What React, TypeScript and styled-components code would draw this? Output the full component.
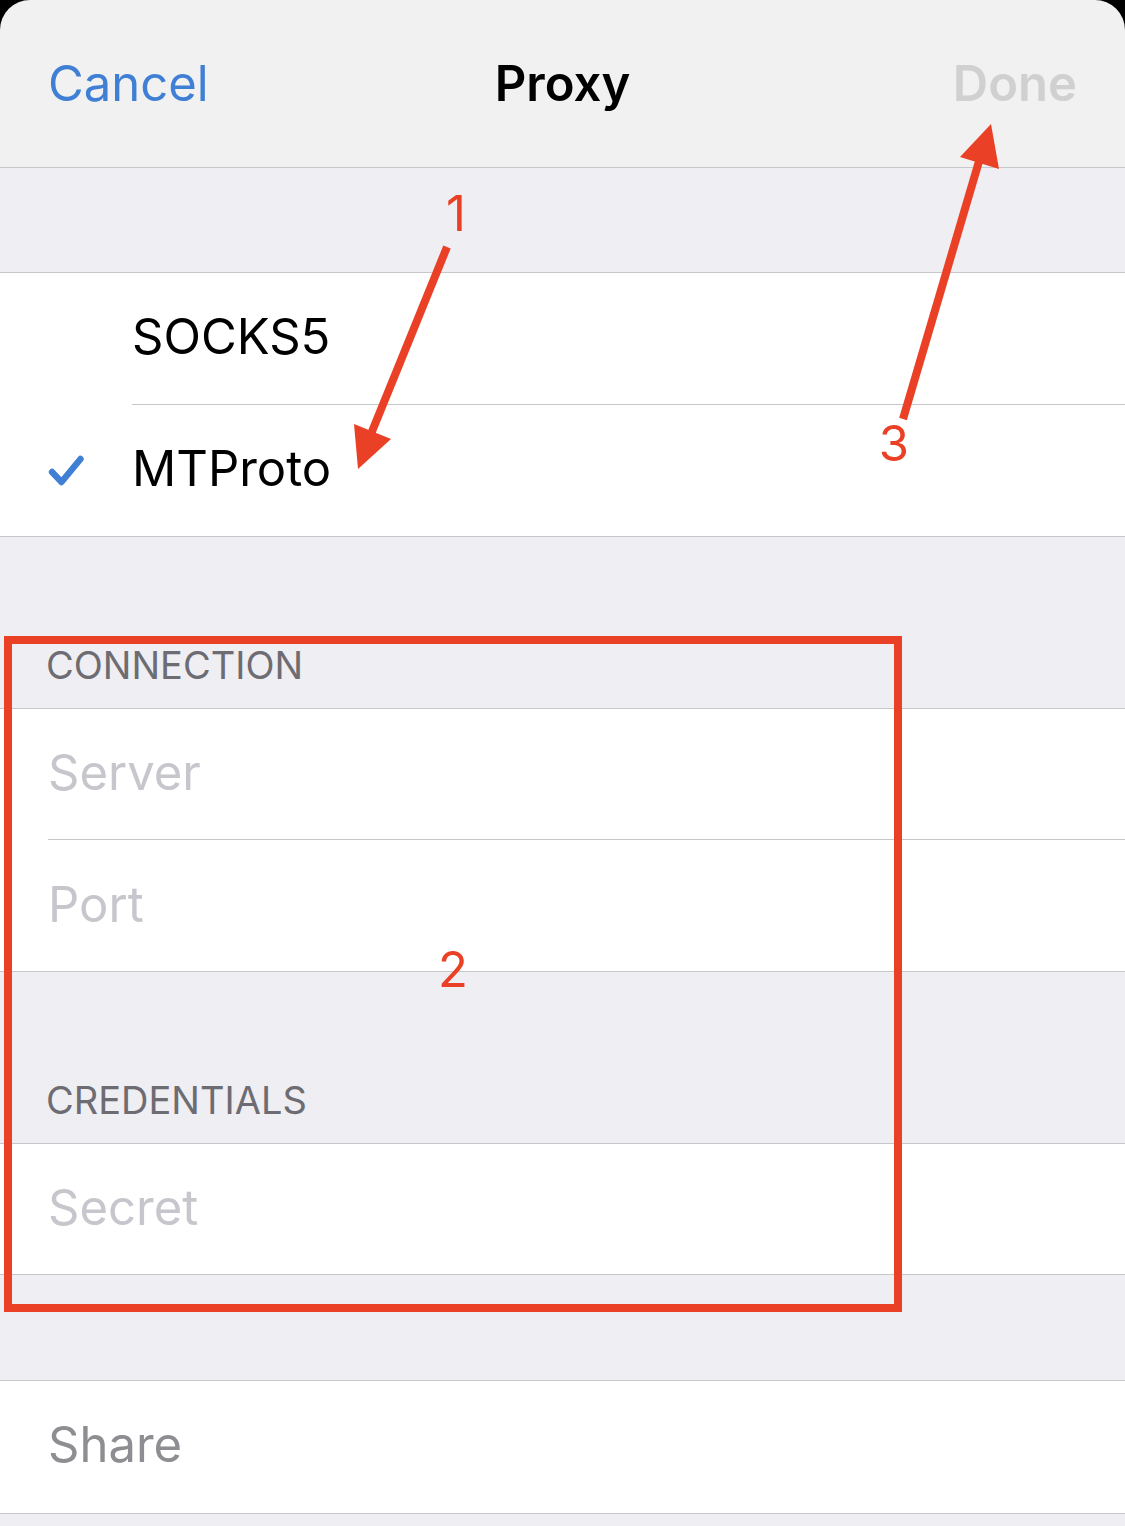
import React, { useState } from "react";
import styled, { createGlobalStyle } from "styled-components";

const color = {
  header: "#f1f1f1",
  page: "#efeef3",
  line: "#c7c7cb",
  blue: "#3f7fd4",
  disabled: "#d0d0d0",
  placeholder: "#c7c6cc",
  caption: "#6d6c72",
  muted: "#8e8e92",
  mark: "#ea4025",
};

const GlobalStyle = createGlobalStyle`
  * { box-sizing: border-box; }
  body {
    margin: 0;
    background: ${color.page};
    font-family: Inter, "Liberation Sans", sans-serif;
    font-size: 49px;
    line-height: 60px;
    color: #000;
  }
  button, input { font: inherit; }
`;

const Screen = styled.main`
  position: relative;
  min-height: 100vh;
  overflow: hidden;
  background: ${color.page};
`;

const Backdrop = styled.div`
  background: #000;
`;

const Header = styled.header`
  display: grid;
  grid-template-columns: 1fr auto 1fr;
  align-items: center;
  height: 168px;
  padding: 0 48px;
  background: ${color.header};
  border-bottom: 1px solid ${color.line};
  border-radius: 30px 30px 0 0;
`;

const Title = styled.h1`
  margin: 0;
  font-size: 49px;
  font-weight: 600;
`;

const HeaderButton = styled.button<{ $strong?: boolean }>`
  justify-self: ${(p) => (p.$strong ? "end" : "start")};
  padding: 0;
  border: 0;
  background: none;
  color: ${color.blue};
  font-weight: ${(p) => (p.$strong ? 600 : 400)};

  &:disabled {
    color: ${color.disabled};
  }
`;

const Group = styled.section<{ $gap?: number }>`
  margin-top: ${(p) => p.$gap ?? 0}px;
  padding: 0;
  background: #fff;
  border-top: 1px solid ${color.line};
  border-bottom: 1px solid ${color.line};
`;

const Caption = styled.h2`
  display: flex;
  align-items: flex-end;
  height: 171px;
  margin: 0;
  padding: 0 46px 19px;
  color: ${color.caption};
  font-size: 38px;
  line-height: 48px;
  font-weight: 400;
`;

const Choice = styled.label`
  display: flex;
  align-items: center;
  padding-left: 48px;
`;

const Tick = styled.svg`
  flex: none;
  width: 36px;
  height: 36px;
  margin-right: 48px;
  fill: none;
  stroke: ${color.blue};
  stroke-width: 6.4;
  stroke-linecap: round;
  stroke-linejoin: round;
`;

const HiddenRadio = styled.input`
  position: absolute;
  opacity: 0;
  width: 1px;
  height: 1px;
`;

const ChoiceText = styled.span`
  flex: 1;
  display: flex;
  align-items: center;
  height: 131px;
  padding-bottom: 4px;

  ${Choice} + ${Choice} & {
    height: 132px;
    border-top: 1px solid ${color.line};
  }
`;

const Field = styled.label`
  display: flex;
  height: 130px;
  margin-left: 48px;

  & + & {
    height: 132px;
    border-top: 1px solid ${color.line};
  }
`;

const FieldInput = styled.input`
  flex: 1;
  min-width: 0;
  padding: 0 0 2px;
  border: 0;
  outline: 0;
  background: none;

  &::placeholder {
    color: ${color.placeholder};
    opacity: 1;
  }
`;

const ShareButton = styled.button`
  display: block;
  width: 100%;
  height: 132px;
  padding: 0 48px 4px;
  border: 0;
  background: none;
  color: ${color.muted};
  text-align: left;
`;

const Overlay = styled.div`
  position: absolute;
  inset: 0;
  pointer-events: none;
  color: ${color.mark};
`;

const Arrows = styled.svg`
  position: absolute;
  top: 0;
  left: 0;
  width: 1125px;
  height: 500px;
  fill: ${color.mark};
  stroke: none;

  line {
    stroke: ${color.mark};
    stroke-width: 8;
  }
`;

const Frame = styled.div`
  position: absolute;
  top: 636px;
  left: 4px;
  width: 898px;
  height: 676px;
  border: 8px solid ${color.mark};
`;

const Step = styled.span<{ $x: number; $y: number }>`
  position: absolute;
  left: ${(p) => p.$x}px;
  top: ${(p) => p.$y}px;
  width: 60px;
  text-align: center;
`;

const types = ["SOCKS5", "MTProto"];

export default function App() {
  const [type, setType] = useState("MTProto");

  return (
    <>
      <GlobalStyle />
      <Screen>
        <Backdrop>
          <Header>
            <HeaderButton type="button">Cancel</HeaderButton>
            <Title>Proxy</Title>
            <HeaderButton type="button" $strong disabled>
              Done
            </HeaderButton>
          </Header>
        </Backdrop>

        <Group $gap={104} role="radiogroup" aria-label="Proxy type">
          {types.map((name) => (
            <Choice key={name}>
              <HiddenRadio
                type="radio"
                name="type"
                checked={type === name}
                onChange={() => setType(name)}
              />
              <Tick viewBox="0 0 36 36" aria-hidden="true">
                {type === name && <path d="M4 20 L13.500 30 L32.500 7" />}
              </Tick>
              <ChoiceText>{name}</ChoiceText>
            </Choice>
          ))}
        </Group>

        <Caption>CONNECTION</Caption>
        <Group>
          <Field>
            <FieldInput aria-label="Server" placeholder="Server" />
          </Field>
          <Field>
            <FieldInput aria-label="Port" placeholder="Port" inputMode="numeric" />
          </Field>
        </Group>

        <Caption>CREDENTIALS</Caption>
        <Group>
          <Field>
            <FieldInput aria-label="Secret" placeholder="Secret" />
          </Field>
        </Group>

        <Group $gap={105}>
          <ShareButton type="button">Share</ShareButton>
        </Group>

        <Overlay>
          <Frame />
          <Arrows viewBox="0 0 1125 500" aria-hidden="true">
            <line x1="447" y1="247" x2="371" y2="434" />
            <polygon points="358,469 354,424 391,439" />
            <line x1="903" y1="419" x2="980" y2="158" />
            <polygon points="991,124 960,157 999,169" />
          </Arrows>
          <Step $x={426} $y={184}>1</Step>
          <Step $x={423} $y={940}>2</Step>
          <Step $x={864} $y={414}>3</Step>
        </Overlay>
      </Screen>
    </>
  );
}
